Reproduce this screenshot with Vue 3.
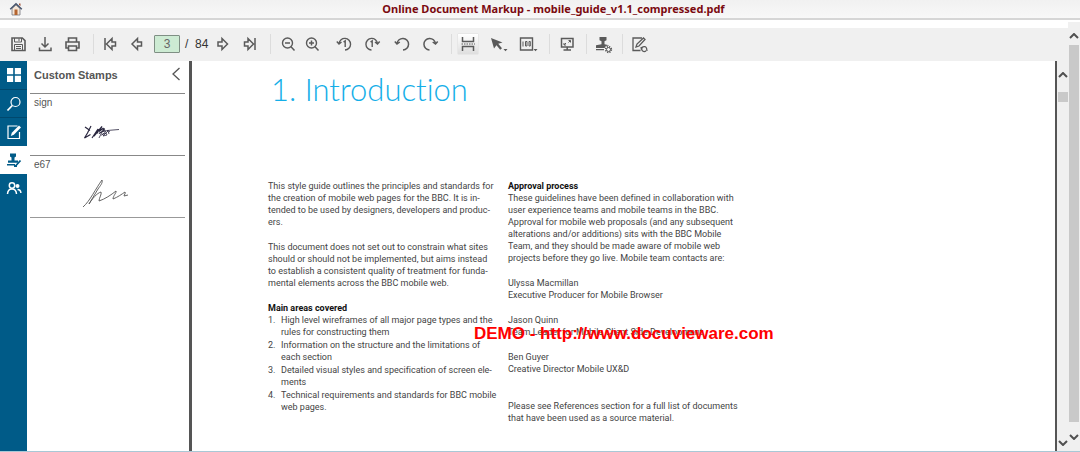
<script setup>
import { ref } from 'vue'

const pageNumber = ref('3')

const tabs = [
  { id: 'thumbs', label: 'Thumbnails' },
  { id: 'search', label: 'Search' },
  { id: 'annotate', label: 'Annotations' },
  { id: 'stamps', label: 'Custom Stamps' },
  { id: 'people', label: 'Collaborators' },
]
const activeTab = ref('stamps')

const areas = [
  ['High level wireframes of all major page types and the', 'rules for constructing them'],
  ['Information on the structure and the limitations of', 'each section'],
  ['Detailed visual styles and specification of screen ele-', 'ments'],
  ['Technical requirements and standards for BBC mobile', 'web pages.'],
]
const intro = [
  [
    'This style guide outlines the principles and standards for',
    'the creation of mobile web pages for the BBC. It is in-',
    'tended to be used by designers, developers and produc-',
    'ers.',
  ],
  [
    'This document does not set out to constrain what sites',
    'should or should not be implemented, but aims instead',
    'to establish a consistent quality of treatment for funda-',
    'mental elements across the BBC mobile web.',
  ],
]
const approval = [
  'These guidelines have been defined in collaboration with',
  'user experience teams and mobile teams in the BBC.',
  'Approval for mobile web proposals (and any subsequent',
  'alterations and/or additions) sits with the BBC Mobile',
  'Team, and they should be made aware of mobile web',
  'projects before they go live. Mobile team contacts are:',
]
const contacts = [
  ['Ulyssa Macmillan', 'Executive Producer for Mobile Browser'],
  ['Jason Quinn', 'Team Leader for Mobile Client Side Development'],
  ['Ben Guyer', 'Creative Director Mobile UX&D'],
]
</script>

<template>
  <div class="app">
    <div class="window">
      <header class="title-bar">
        <a href="#" class="home" aria-label="Home">
          <svg width="14" height="14" viewBox="0 0 14 14">
            <path d="M3 6.500 7 3l4 3.500V13H3z" fill="#f4e6d8" stroke="#77777f" stroke-width=".8" />
            <path d="M10 1.500h1.500V4L10 3z" fill="#a4533a" />
            <path d="M1.200 7.200 7 1.800l5.800 5.400" fill="none" stroke="#46536b" stroke-width="1.500" />
            <path d="M5.500 7.500h3V13h-3z" fill="#b5652f" />
          </svg>
        </a>
        <h1>Online Document Markup - mobile_guide_v1.1_compressed.pdf</h1>
      </header>

      <div class="below">
        <div class="main">
          <div class="toolbar" role="toolbar" aria-label="Document tools">
            <div class="group">
              <button aria-label="Save">
                <svg viewBox="0 0 20 20"><path d="M4 4h10.300l2.700 2.700V16.500H4z" stroke-width="1.600" /><path d="M6.500 4v4h7V4M11 4.500v2.500M6.500 16v-5.500h8V16M8 12.500h5M8 14.500h5" /></svg>
              </button>
              <button aria-label="Download">
                <svg viewBox="0 0 20 20"><path d="M10 3v10M6.500 9.500 10 13l3.500-3.500M4.500 13.500v3h11.500v-3" stroke-width="1.500" /></svg>
              </button>
              <button aria-label="Print">
                <svg viewBox="0 0 20 20"><path d="M6.500 8V4h8v4M6.500 14H4V8h13v6H14.500M6.500 12h8v4.500h-8z" stroke-width="1.600" /></svg>
              </button>
            </div>
            <div class="group pages">
              <button aria-label="First page">
                <svg viewBox="0 0 20 20"><path d="M5 4v12M6.500 10l5.500-5.500v3.500h3.500v4h-3.500v3.500z" stroke-width="1.500" /></svg>
              </button>
              <button aria-label="Previous page">
                <svg viewBox="0 0 20 20"><path d="M5 10l5.500-5.500v3.500h4v4h-4v3.500z" stroke-width="1.500" /></svg>
              </button>
              <input v-model="pageNumber" type="text" aria-label="Page number" />
              <span class="count">/&nbsp; 84</span>
              <button aria-label="Next page">
                <svg viewBox="0 0 20 20"><path d="M15.500 10l-5.500-5.500v3.500H6v4h4v3.500z" stroke-width="1.500" /></svg>
              </button>
              <button aria-label="Last page">
                <svg viewBox="0 0 20 20"><path d="M16 4v12M14.500 10 9 4.500v3.500H5.500v4H9v3.500z" stroke-width="1.500" /></svg>
              </button>
            </div>
            <div class="group zoom">
              <button aria-label="Zoom out">
                <svg viewBox="0 0 20 20"><circle cx="10.500" cy="9" r="5" stroke-width="1.400" /><path d="M14 12.800l3.500 3.700M8 9h5" stroke-width="1.500" /></svg>
              </button>
              <button aria-label="Zoom in">
                <svg viewBox="0 0 20 20"><circle cx="10.500" cy="9" r="5" stroke-width="1.400" /><path d="M14 12.800l3.500 3.700M8 9h5M10.500 6.500v5" stroke-width="1.500" /></svg>
              </button>
              <div class="turns">
                <button aria-label="Rotate page left">
                  <svg viewBox="0 0 20 20"><path d="M5 9.500a5.800 5.800 0 1 1 6 6.500M2.800 7.500 5 10l2.500-2M9.500 8l1.700-1.200V13" stroke-width="1.400" /></svg>
                </button>
                <button aria-label="Rotate page right">
                  <svg viewBox="0 0 20 20"><path d="M15.500 9.500a5.800 5.800 0 1 0-6 6.500M17.700 7.500l-2.200 2.500L13 8M8.500 8l1.700-1.200V13" stroke-width="1.400" /></svg>
                </button>
              </div>
              <div class="turns all">
                <button aria-label="Rotate all left">
                  <svg viewBox="0 0 20 20"><path d="M5 9.500a5.800 5.800 0 1 1 6 6.500M2.800 7.500 5 10l2.800-2" stroke-width="1.500" /></svg>
                </button>
                <button aria-label="Rotate all right">
                  <svg viewBox="0 0 20 20"><path d="M15.500 9.500a5.800 5.800 0 1 0-6 6.500M17.700 7.500l-2.200 2.500-2.800-2" stroke-width="1.500" /></svg>
                </button>
              </div>
            </div>
            <div class="group view">
              <button class="pressed" aria-label="Continuous view" aria-pressed="true">
                <svg viewBox="0 0 20 20"><path d="M4.500 3v4.500h11V3M4.500 17v-4.500h11V17" stroke-width="1.500" /><path d="M3.500 10h13.500" stroke-dasharray="1.500 1" /></svg>
              </button>
              <button aria-label="Selection tool">
                <svg viewBox="0 0 20 20"><path class="solid" d="M3 4 14.500 8.500l-4.300 1.300 3.800 4.400-1.800 1.600-3.700-4.600L6 14.500z" /><path class="solid" d="M15.500 15h4l-2 2.300z" /></svg>
              </button>
              <button aria-label="Zoom level">
                <svg viewBox="0 0 20 20"><path d="M2.500 4h12v12h-12z" stroke-width="1.400" /><path d="M5 7.500v5M7.500 7.500h1.500v4.500H7.500zM11 7.500h1.300v4.500H11z" /><path class="solid" d="M15.500 15h4l-2 2.300z" /></svg>
              </button>
            </div>
            <div class="group single">
              <button aria-label="Full screen">
                <svg viewBox="0 0 20 20"><path d="M4.500 4.500h11.500v8.500H4.500zM10.200 13v3M6.500 16h7.500" stroke-width="1.500" /><path d="M11.500 6.500h2v2M9 11H7V9M13.300 6.700l-1.800 1.800M7.200 10.800 9 9" /></svg>
              </button>
            </div>
            <div class="group single">
              <button aria-label="Stamp settings">
                <svg viewBox="0 0 20 20"><path class="solid" d="M6.500 3h7v3.300l-2 1v3l4.500 1V14H3v-2.700l5.500-1v-3l-2-1zM3 15h8v1.300H3z" /><circle cx="15.500" cy="15.500" r="4" fill="#f0f0f0" stroke="none" /><circle cx="15.500" cy="15.500" r="2.900" stroke-dasharray="1.300 1" stroke-width="1.500" /><circle cx="15.500" cy="15.500" r="2" /></svg>
              </button>
            </div>
            <div class="group single last">
              <button aria-label="Refresh annotations">
                <svg viewBox="0 0 20 20"><path d="M13 4H4v12.500h7.500" stroke-width="1.300" /><path d="M7 13l1-3 6.500-6 1.500 1.500L10 12z" stroke-width="1.300" /><path d="M17.500 14a2.500 2.500 0 1 0-.5 2.800M12.500 15.500l-.5-2.500M18 17l-.5-3" stroke-width="1.300" /></svg>
              </button>
            </div>
          </div>

          <div class="workspace">
            <nav class="tabs" aria-label="Side panels">
              <button
                v-for="tab in tabs"
                :key="tab.id"
                :class="{ active: activeTab === tab.id }"
                :aria-label="tab.label"
                @click="activeTab = tab.id"
              >
                <svg v-if="tab.id === 'thumbs'" viewBox="0 0 16 16"><path class="fill" d="M1 1h6.200v6.200H1zM8.800 1H15v6.200H8.800zM1 8.800h6.200V15H1zM8.800 8.800H15V15H8.800z" /></svg>
                <svg v-else-if="tab.id === 'search'" viewBox="0 0 16 16"><circle cx="9.500" cy="6" r="4.500" /><path d="M6.200 9.500 1.500 14.500" stroke-width="1.800" /></svg>
                <svg v-else-if="tab.id === 'annotate'" viewBox="0 0 16 16"><path d="M11.500 2H2v12.500h11.500V8" /><path class="fill" d="M4.800 12l1-3.200L13 1.500l2 2-7.200 7.200z" /></svg>
                <svg v-else-if="tab.id === 'stamps'" viewBox="0 0 16 16"><path class="fill" d="M4 1.500h6v3l-1.500 1v3H12v2.300H2V8.500h3.500v-3L4 4.500zM1 12h8v1.500H1z" /><path d="M10 13.500l4.500-5M8 14h3" stroke-width="1.800" /></svg>
                <svg v-else viewBox="0 0 16 16"><circle cx="6" cy="5.500" r="2.700" stroke-width="1.500" /><path d="M1.500 14c.2-3.500 2-5 4.500-5s4.300 1.500 4.500 5" stroke-width="1.500" /><circle class="fill" cx="11.500" cy="6" r="2" /><path d="M11.500 9.500c2 0 3.200 1 3.400 3.500" stroke-width="1.500" /></svg>
              </button>
            </nav>

            <aside class="panel">
              <div class="panel-head">
                <h2>Custom Stamps</h2>
                <button aria-label="Collapse panel">
                  <svg width="10" height="14" viewBox="0 0 10 14"><path d="M8.500 1 2 7l6.500 6" fill="none" stroke="#555" stroke-width="1.300" /></svg>
                </button>
              </div>
              <ul>
                <li>
                  <span>sign</span>
                  <svg width="38" height="16" viewBox="0 0 38 16" fill="none" stroke="#29263f">
                    <path d="M2 3l5 3.500M8 2 4.500 9 1.500 14l6-3.500M9 14l6-9-.5 4.500M11 12 19 2.500l-3 5 4-3 1 2-5 3" stroke-width="1.200" />
                    <path d="M16 14l5-10 1.500 4-4 3 4.500-2 1 2-4 1 5-5 1 3M20 7.500l5-1 2 1.500M24 6.500l12-1" stroke-width=".8" />
                  </svg>
                </li>
                <li>
                  <span>e67</span>
                  <svg width="46" height="30" viewBox="0 0 46 30" fill="none" stroke="#555" stroke-width=".9">
                    <path d="M1 28C8 22 14 9 20 1c1 3-2 6-4 9L7 25c3-5 8-11 12-12 1 2-2 6-2 9 6-2 12-6 17-10 1 1-3 5-3 8 5-2 9-5 12-7 1 1-1 3-1 4l4-1" />
                  </svg>
                </li>
              </ul>
            </aside>

            <main class="viewer">
              <article class="sheet">
                <h2>1. Introduction</h2>
                <div class="columns">
                  <section>
                    <p v-for="(lines, i) in intro" :key="i">
                      <span v-for="line in lines" :key="line" class="line">{{ line }}</span>
                    </p>
                    <h3>Main areas covered</h3>
                    <ol>
                      <li v-for="(lines, i) in areas" :key="i">
                        <span class="num">{{ i + 1 }}.</span>
                        <div>
                          <span v-for="line in lines" :key="line" class="line">{{ line }}</span>
                        </div>
                      </li>
                    </ol>
                  </section>
                  <section>
                    <h3>Approval process</h3>
                    <p>
                      <span v-for="line in approval" :key="line" class="line">{{ line }}</span>
                    </p>
                    <p v-for="person in contacts" :key="person[0]">
                      <span v-for="line in person" :key="line" class="line">{{ line }}</span>
                    </p>
                    <p class="closing">
                      <span class="line">Please see References section for a full list of documents</span>
                      <span class="line">that have been used as a source material.</span>
                    </p>
                  </section>
                </div>
                <div class="watermark">DEMO - http://www.docuvieware.com</div>
              </article>
            </main>

            <div class="scroll inner" aria-hidden="true">
              <svg viewBox="0 0 10 6"><path d="M1 5l4-4 4 4" /></svg>
              <i></i>
              <svg class="down" viewBox="0 0 10 6"><path d="M1 1l4 4 4-4" /></svg>
            </div>
          </div>
        </div>

        <div class="scroll outer" aria-hidden="true">
          <svg viewBox="0 0 10 6"><path d="M1 5l4-4 4 4" /></svg>
          <i></i>
          <svg class="down" viewBox="0 0 10 6"><path d="M1 1l4 4 4-4" /></svg>
        </div>
      </div>
    </div>
  </div>
</template>

<style>
body {
  margin: 0;
  background: #fff;
}
</style>

<style scoped>
* {
  box-sizing: border-box;
}
h1,
h2,
h3,
p,
ul,
ol {
  margin: 0;
  padding: 0;
  list-style: none;
}
button {
  display: flex;
  align-items: center;
  justify-content: center;
  padding: 0;
  border: 0;
  background: none;
}
.app {
  height: 100vh;
  font-family: "Liberation Sans", Arial, sans-serif;
  overflow: hidden;
}
.window {
  display: flex;
  flex-direction: column;
  height: 100%;
  border-bottom: 1px solid #a9c8d6;
}
.title-bar {
  display: flex;
  align-items: center;
  flex: none;
  height: 20px;
  padding: 0 0 0 9px;
  background: linear-gradient(#f1f1f1, #f8f8f8);
  border-bottom: 2px solid #d6d6d6;
}
.home {
  display: flex;
}
.title-bar h1 {
  flex: 1;
  padding-left: 4px;
  font: bold 11px/18px "Noto Sans", Tahoma, sans-serif;
  color: #7b0a10;
  text-align: center;
}
.below {
  display: flex;
  flex: 1;
  min-height: 0;
}
.main {
  display: flex;
  flex-direction: column;
  flex: 1;
  min-width: 0;
  padding-top: 8px;
}
.toolbar {
  display: flex;
  align-items: center;
  flex: none;
  height: 33px;
  padding: 0 0 1px 8px;
  background: #f0f0f0;
}
.toolbar svg {
  width: 20px;
  height: 20px;
  fill: none;
  stroke: #5a5a5a;
  stroke-width: 1;
}
.toolbar .solid {
  fill: #5a5a5a;
  stroke: none;
}
.group {
  display: flex;
  align-items: center;
  gap: 7px;
  height: 20px;
  padding-right: 11px;
  margin-right: 6px;
  border-right: 1px solid #dcdcdc;
}
.group button {
  width: 20px;
  height: 20px;
}
.pages input {
  width: 26px;
  height: 18px;
  padding: 0;
  border: 1px solid #7f8f84;
  border-radius: 1px;
  background: #cdebd3;
  color: #666;
  font: 12px "Liberation Sans", Arial, sans-serif;
  text-align: center;
}
.count {
  width: 18px;
  margin-left: -2px;
  margin-right: 2px;
  font-size: 12px;
  color: #333;
  white-space: nowrap;
}
.zoom {
  gap: 4px;
}
.turns {
  display: flex;
  gap: 8px;
  margin-left: 9px;
}
.turns.all {
  margin-left: 6px;
}
.view {
  gap: 10px;
  margin-right: 7px;
}
.view .pressed {
  background: linear-gradient(#fff, #dedede);
  box-shadow: 0 0 1px #bbb;
}
.single {
  padding-right: 9px;
}
.last {
  border: 0;
}
.workspace {
  display: flex;
  flex: 1;
  min-height: 0;
}
.tabs {
  flex: none;
  width: 27px;
  background: #005b88;
}
.tabs button {
  width: 100%;
  height: 28px;
  color: #fff;
}
.tabs button:nth-child(2) {
  height: 29px;
  border-top: 1px solid #00486d;
  border-bottom: 1px solid #00486d;
}
.tabs button.active {
  background: #fff;
  color: #005b88;
}
.tabs svg {
  width: 16px;
  height: 16px;
  fill: none;
  stroke: currentColor;
  stroke-width: 1.2;
}
.tabs .fill {
  fill: currentColor;
  stroke: none;
}
.panel {
  flex: none;
  width: 165px;
  padding: 0 4px 0 3px;
  border-right: 3px solid #555;
  color: #555;
}
.panel-head {
  display: flex;
  justify-content: space-between;
  align-items: center;
  height: 32px;
  padding: 0 4px;
}
.panel-head h2 {
  padding-bottom: 4px;
  font-size: 11px;
  line-height: 14px;
}
.panel-head button {
  padding-bottom: 6px;
}
.panel li {
  display: flex;
  flex-direction: column;
  align-items: center;
  height: 62px;
  padding: 3px 12px 0 0;
  border-top: 1px solid #888;
  font-size: 10px;
  line-height: 12px;
}
.panel li:last-child {
  height: 63px;
  padding-right: 6px;
  border-bottom: 1px solid #999;
}
.panel li span {
  align-self: flex-start;
  padding-left: 4px;
}
.panel li svg {
  margin: auto;
}
.viewer {
  flex: 1;
  min-width: 0;
  overflow: hidden;
  background: #fff;
}
.sheet {
  position: relative;
  padding: 9px 76px 0;
  font-family: Lato, "Gill Sans", sans-serif;
  font-variant-ligatures: none;
  color: #444;
}
.sheet h2 {
  padding-left: 3px;
  font-size: 31px;
  font-weight: 300;
  line-height: 38px;
  color: #14aee8;
}
.columns {
  display: flex;
  gap: 16px;
  padding-top: 72px;
  font-family: Roboto, "Gill Sans", sans-serif;
  font-size: 9px;
  line-height: 12px;
}
.columns section {
  flex: none;
  width: 224px;
}
.columns p {
  margin-bottom: 13px;
}
.columns h3 {
  font-size: 9px;
  line-height: 12px;
  color: #111;
}
.line {
  display: block;
  white-space: nowrap;
}
.columns ol {
  display: grid;
  gap: 1px;
}
.columns li {
  display: flex;
}
.num {
  flex: none;
  width: 13px;
}
.columns .closing {
  padding-top: 12px;
}
.watermark {
  position: absolute;
  top: 263px;
  left: 282px;
  font: bold 17px/20px "Liberation Sans", Arial, sans-serif;
  color: #f00;
  white-space: nowrap;
}
.scroll {
  display: flex;
  flex-direction: column;
  align-items: center;
  flex: none;
  width: 12px;
  background: #f0f0f0;
}
.scroll svg {
  flex: none;
  width: 10px;
  height: 6px;
  fill: none;
  stroke: #505050;
  stroke-width: 2;
}
.scroll i {
  width: 10px;
  background: #c9c9c9;
}
.inner {
  width: 13px;
  padding: 11px 0 5px;
  border-left: 2px solid #555;
}
.inner i {
  height: 10px;
  margin-top: 14px;
}
.scroll .down {
  margin-top: auto;
}
.outer {
  margin-top: 2px;
  padding: 11px 0;
}
.outer i {
  flex: 1;
  margin: 6px 0 12px;
}
</style>
